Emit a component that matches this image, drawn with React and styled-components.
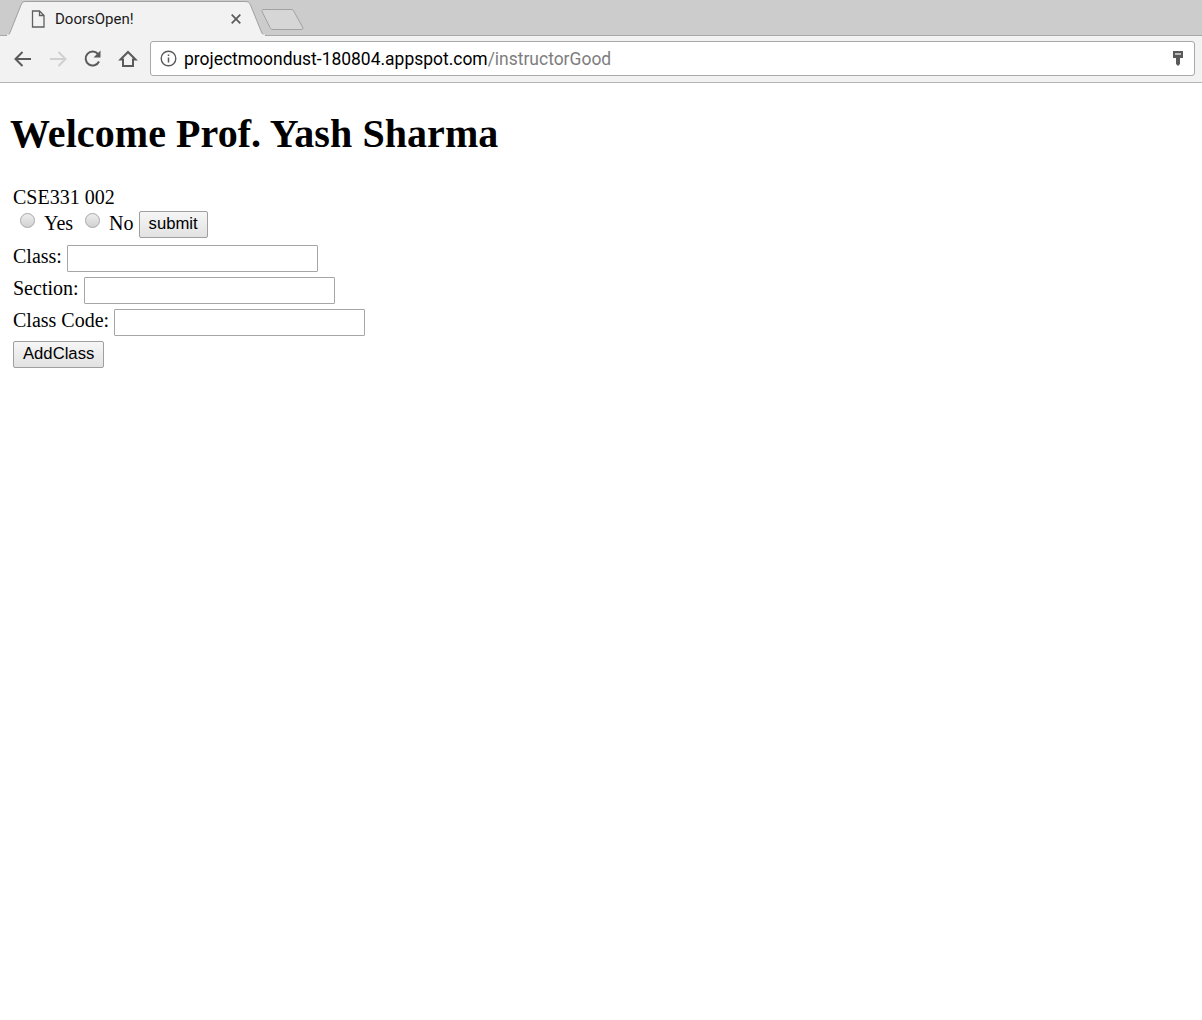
import React from "react";
import styled, { createGlobalStyle } from "styled-components";

const Global = createGlobalStyle`
  html, body { margin: 0; padding: 0; background: #fff; }
  body { font-family: "Liberation Serif", serif; color: #000; }
`;

const Page = styled.div`
  width: 1202px;
  height: 1020px;
  overflow: hidden;
`;

const TabStrip = styled.div`
  height: 36px;
  background: #cccccc;
  display: flex;
  align-items: flex-end;
  box-sizing: border-box;
  border-bottom: 1px solid #a8a8a8;
`;

const Tab = styled.div`
  position: relative;
  width: 266px;
  height: 36px;
  margin-bottom: -1px;
  flex: none;
  display: flex;
  align-items: center;
  padding: 2px 0 0 31px;
  box-sizing: border-box;
`;

const TabShape = styled.svg`
  position: absolute;
  left: 0;
  top: 0;
`;

const Favicon = styled.svg`
  position: relative;
  margin-right: 10px;
  flex: none;
`;

const TabTitle = styled.span`
  position: relative;
  font: 15px/18px Roboto, sans-serif;
  color: #1a1a1a;
  width: 175px;
`;

const TabClose = styled.svg`
  position: relative;
  flex: none;
`;

const NewTab = styled.svg`
  flex: none;
  margin: 0 0 4px -6px;
`;

const Toolbar = styled.div`
  height: 47px;
  box-sizing: border-box;
  background: #f2f2f2;
  border-bottom: 1px solid #b5b5b5;
  display: flex;
  align-items: center;
  padding: 0 7px 1px 13px;
`;

const NavIcon = styled.svg`
  flex: none;
  margin-right: ${(p) => p.$gap}px;
`;

const Omnibox = styled.div`
  flex: 1;
  height: 35px;
  box-sizing: border-box;
  background: #fff;
  border: 1px solid #a9a9a9;
  border-radius: 3px;
  display: flex;
  align-items: center;
  padding: 0 10px 0 9px;
`;

const Url = styled.div`
  flex: 1;
  margin-left: 7px;
  font: 17.47px/22px Roboto, sans-serif;
  color: #000;
`;

const UrlPath = styled.span`
  color: #7d7d7d;
`;

const Content = styled.main`
  padding: 31px 10px 0;
`;

const Heading = styled.h1`
  margin: 0;
  font-size: 40px;
  line-height: 40px;
  font-weight: bold;
  letter-spacing: 0.07px;
`;

const Form = styled.form`
  margin: 32px 0 0 3px;
  font-size: 20px;
  line-height: 23px;
`;

const CourseName = styled.div`
  height: 24px;
`;

const Line = styled.div`
  display: flex;
  align-items: center;
  height: 32px;
  margin-top: ${(p) => p.$top || 0}px;
`;

const RadioRow = styled.div`
  display: flex;
  align-items: center;
  height: 28px;
`;

const Radio = styled.input.attrs({ type: "radio" })`
  appearance: none;
  width: 15px;
  height: 15px;
  margin: -7px 9px 0 ${(p) => p.$left}px;
  border: 1px solid #a6a6a6;
  border-radius: 50%;
  box-sizing: border-box;
  background: linear-gradient(#ededed, #d2d2d2);
`;

const RadioText = styled.span`
  margin-top: -2px;
`;

const Button = styled.button`
  height: 27px;
  padding: 0 9px;
  box-sizing: border-box;
  border: 1px solid #9f9f9f;
  border-radius: 2px;
  background: linear-gradient(#f6f6f6, #e2e2e2);
  font: 16.67px "Liberation Sans", Arial, sans-serif;
  color: #000;
  margin-left: ${(p) => p.$left || 0}px;
`;

const Label = styled.label`
  margin: -4px 5px 0 0;
`;

const TextInput = styled.input`
  width: 251px;
  height: 27px;
  box-sizing: border-box;
  border: 1px solid #a6a6a6;
  border-radius: 1px;
  background: #fff;
  padding: 1px 2px;
  outline: none;
`;

const App = () => {
  return (
    <Page>
      <Global />
      <TabStrip>
        <Tab>
          <TabShape width="266" height="36" viewBox="0 0 266 36">
            <path d="M6 36 C8 36 9 35 10 32.500 L21 5 C22 2 23.500 1.500 26 1.500 L245 1.500 C248 1.500 249 2 250.500 5 L261 31 C262 34 264 36 266 36 Z" fill="#f2f2f2" stroke="#a0a0a0" />
            <path d="M7 35.500 L265 35.500" stroke="#f2f2f2" strokeWidth="2" />
          </TabShape>
          <Favicon width="14" height="18" viewBox="0 0 14 18">
            <path d="M1.500 1 H8.500 L13 5.500 V17 H1.500 Z M8.500 1 V5.500 H13" fill="none" stroke="#5f5f5f" strokeWidth="1.300" />
          </Favicon>
          <TabTitle>DoorsOpen!</TabTitle>
          <TabClose width="12" height="12" viewBox="0 0 12 12">
            <path d="M1.700 1.700 L10.300 10.300 M10.300 1.700 L1.700 10.300" stroke="#5a5a5a" strokeWidth="1.700" />
          </TabClose>
        </Tab>
        <NewTab width="45" height="23" viewBox="0 0 45 23">
          <path d="M4 1.500 H31 C32.500 1.500 33.500 2 34 3.500 L42.500 19 C43.500 21 42.500 21.500 41 21.500 H13 C11.500 21.500 10.500 21 10 19.500 L2 3.500 C1.500 2 2.500 1.500 4 1.500 Z" fill="#d6d6d6" stroke="#a2a2a2" />
        </NewTab>
      </TabStrip>
      <Toolbar>
        <NavIcon $gap={15} width="20" height="18" viewBox="0 0 20 18">
          <path d="M18 9 H3 M9.500 2 L2.500 9 L9.500 16" fill="none" stroke="#5a5a5a" strokeWidth="2" />
        </NavIcon>
        <NavIcon $gap={15} width="20" height="18" viewBox="0 0 20 18">
          <path d="M2 9 H17 M10.500 2 L17.500 9 L10.500 16" fill="none" stroke="#d0d0d0" strokeWidth="2" />
        </NavIcon>
        <NavIcon $gap={15} width="20" height="20" viewBox="0 0 20 20">
          <path d="M16 12.500 A7 7 0 1 1 15 5" fill="none" stroke="#5a5a5a" strokeWidth="2" />
          <path d="M17.500 1.500 V8.500 H10.500 Z" fill="#5a5a5a" />
        </NavIcon>
        <NavIcon $gap={12} width="20" height="18" viewBox="0 0 20 18">
          <path d="M2.500 9.500 L10 2 L17.500 9.500 H15 V16 H5 V9.500 Z" fill="none" stroke="#5a5a5a" strokeWidth="2" strokeLinejoin="miter" />
        </NavIcon>
        <Omnibox>
          <svg width="17" height="17" viewBox="0 0 17 17">
            <circle cx="8.500" cy="8.500" r="7.300" fill="none" stroke="#5a5a5a" strokeWidth="1.400" />
            <path d="M8.500 7.500 V12.500 M8.500 4.500 V6" stroke="#5a5a5a" strokeWidth="1.500" />
          </svg>
          <Url>
            projectmoondust-180804.appspot.com<UrlPath>/instructorGood</UrlPath>
          </Url>
          <svg width="12" height="17" viewBox="0 0 12 17">
            <path d="M1 1 H11 V8 H8 V14 L6 16 L4 14 V8 H1 Z" fill="#5a5a5a" />
            <rect x="3" y="3" width="6" height="2" fill="#bbb" />
          </svg>
        </Omnibox>
      </Toolbar>
      <Content>
        <Heading>Welcome Prof. Yash Sharma</Heading>
        <Form onSubmit={(e) => e.preventDefault()}>
          <CourseName>CSE331 002</CourseName>
          <RadioRow>
            <Radio name="open" $left={7} />
            <RadioText>Yes</RadioText>
            <Radio name="open" $left={12} />
            <RadioText>No</RadioText>
            <Button $left={5} type="button">submit</Button>
          </RadioRow>
          <Line $top={4}>
            <Label>Class:</Label>
            <TextInput />
          </Line>
          <Line>
            <Label>Section:</Label>
            <TextInput />
          </Line>
          <Line>
            <Label>Class Code:</Label>
            <TextInput />
          </Line>
          <Line>
            <Button type="button">AddClass</Button>
          </Line>
        </Form>
      </Content>
    </Page>
  );
};

export default App;
